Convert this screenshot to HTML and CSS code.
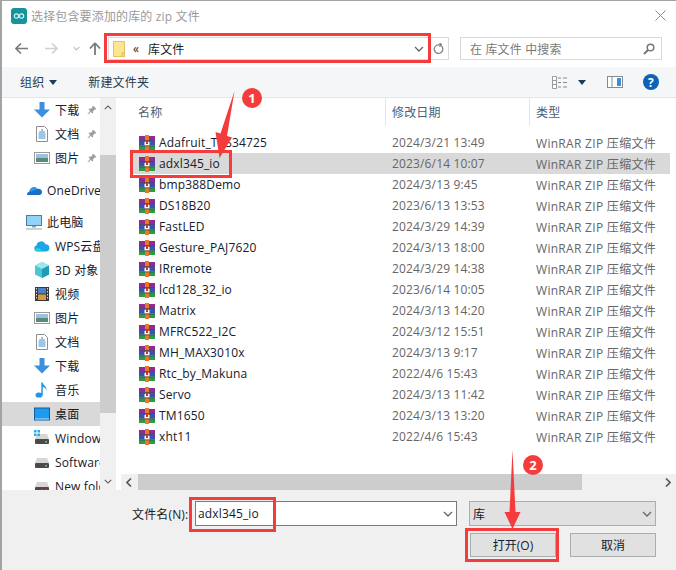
FILE: index.html
```html
<!DOCTYPE html>
<html lang="zh-CN">

<head>
  <meta charset="UTF-8">
  <title>选择包含要添加的库的 zip 文件</title>
  <link rel="stylesheet" href="styles.css">
</head>

<body>
  <!-- Shared icons -->
  <svg class="sprites" aria-hidden="true">
    <symbol id="i-rar" viewBox="0 0 16 16">
      <rect x="0" y="1" width="16" height="4.500" fill="#8e2c91"/>
      <rect x="0" y="5.500" width="16" height="5" fill="#3d4fb0"/>
      <rect x="0" y="10.500" width="16" height="4.500" fill="#2f9a46"/>
      <rect x="6" y="0" width="4" height="16" fill="#e8792b"/>
      <rect x="5.500" y="7" width="5" height="3.500" fill="#fff"/>
      <rect x="7" y="6" width="2" height="3" fill="#c9352a"/>
      <rect x="0" y="5" width="16" height="1" fill="#2a2a55" opacity=".6"/>
      <rect x="0" y="10.400" width="16" height="1" fill="#1f2f3f" opacity=".6"/>
    </symbol>
    <symbol id="i-down" viewBox="0 0 16 16">
      <path d="M5.500 0h5v7.500H16L8 15.500 0 7.500h5.500z" fill="#3d8edb"/>
    </symbol>
    <symbol id="i-doc" viewBox="0 0 16 16">
      <path d="M2.500.5h8l3 3v12h-11z" fill="#fff" stroke="#8f8f8f"/>
      <path d="M7 4h2M5 6h6M4.500 8h7M4.500 10h7M4.500 12h7" stroke="#3a8fd0"/>
    </symbol>
    <symbol id="i-pic" viewBox="0 0 16 16">
      <rect x=".5" y="2.500" width="15" height="11" fill="#fff" stroke="#9a9a9a"/>
      <rect x="2" y="4" width="12" height="4" fill="#9cc0de"/>
      <rect x="2" y="8" width="12" height="4" fill="#5b8a78"/>
    </symbol>
    <symbol id="i-pin" viewBox="0 0 10 10">
      <path d="M6 .5l3.500 3.500-1 .6-.7-.2-1.800 1.800.2 1.500-.8.8-1.600-1.600L1 9.500l-.5-.5 2.600-3-1.600-1.600.8-.8 1.500.2L5.600 2l-.2-.7z" fill="#9aa0a6"/>
    </symbol>
    <symbol id="i-disk" viewBox="0 0 16 16">
      <path d="M3 4h10l2 5H1z" fill="#d6d6d6"/>
      <rect x="1" y="9" width="14" height="5" rx="1" fill="#4a4a4a"/>
      <rect x="11" y="11" width="2" height="1.500" fill="#4fd35a"/>
    </symbol>
    <symbol id="i-chev" viewBox="0 0 10 6">
      <path d="M1 1l4 4 4-4" fill="none" stroke="currentColor" stroke-width="1.300"/>
    </symbol>
    <symbol id="i-caret" viewBox="0 0 8 5">
      <path d="M0 0h8L4 5z" fill="#1f3a5f"/>
    </symbol>
  </svg>

  <div class="dialog">

    <div class="titlebar">
      <svg class="app-icon" width="16" height="16" viewBox="0 0 16 16">
        <rect width="16" height="16" rx="3" fill="#17939b"/>
        <circle cx="5.500" cy="8" r="2.200" fill="none" stroke="#d7f0ee" stroke-width="1.200"/>
        <circle cx="10.500" cy="8" r="2.200" fill="none" stroke="#d7f0ee" stroke-width="1.200"/>
      </svg>
      <span class="title">选择包含要添加的库的 zip 文件</span>
      <svg class="close" width="11" height="11" viewBox="0 0 11 11">
        <path d="M.5.500l10 10M10.500.500l-10 10" stroke="#8a8a8a"/>
      </svg>
    </div>

    <div class="navbar">
      <svg class="nav-back" width="13" height="11" viewBox="0 0 13 11">
        <path d="M6 .5L1 5.500l5 5M1 5.500h12" fill="none" stroke="#7a7a7a" stroke-width="1.600"/>
      </svg>
      <svg class="nav-forward" width="13" height="11" viewBox="0 0 13 11">
        <path d="M7 .5l5 5-5 5M12 5.500H0" fill="none" stroke="#d0d0d0" stroke-width="1.600"/>
      </svg>
      <svg class="nav-history" width="7" height="5"><use href="#i-chev"/></svg>
      <svg class="nav-up" width="12" height="13" viewBox="0 0 12 13">
        <path d="M6 1L1 6.500M6 1l5 5.500M6 1v12" fill="none" stroke="#7a7a7a" stroke-width="1.800"/>
      </svg>
      <div class="address">
        <svg width="12" height="16" viewBox="0 0 12 16">
          <path d="M.5.500h11v15H.5z" fill="#fde58f" stroke="#e3c363"/>
          <path d="M9 11.500h2.500v4H9z" fill="#f4d572" stroke="#e3c363"/>
        </svg>
        <span class="crumb-more">«</span>
        <span class="crumb">库文件</span>
        <svg class="address-chev" width="10" height="6"><use href="#i-chev"/></svg>
      </div>
      <div class="refresh">
        <svg width="11" height="12" viewBox="0 0 11 12">
          <path d="M8.500 3a4.300 4.300 0 1 1-3-1.200H8M6.500 0l2 1.800-2 1.800" fill="none" stroke="#7d7d7d" stroke-width="1.200"/>
        </svg>
      </div>
      <div class="search">
        <span>在 库文件 中搜索</span>
        <svg width="12" height="12" viewBox="0 0 12 12">
          <circle cx="7.500" cy="4.500" r="3.300" fill="none" stroke="#777" stroke-width="1.500"/>
          <path d="M5 7L1 11" stroke="#777" stroke-width="2"/>
        </svg>
      </div>
    </div>

    <div class="toolbar">
      <span class="tool">组织</span>
      <svg class="tool-caret" width="8" height="5"><use href="#i-caret"/></svg>
      <span class="tool new-folder">新建文件夹</span>
      <svg class="view-icon" width="16" height="13" viewBox="0 0 16 13">
        <path d="M.5.500h4v12h-4zM.5 4.500h4M.5 8.500h4" fill="#fff" stroke="#9a9a9a"/>
        <path d="M6 2h3M11 2h4M6 6.500h3M11 6.500h4M6 11h3M11 11h4" stroke="#8a8a8a"/>
      </svg>
      <svg class="view-caret" width="8" height="5"><use href="#i-caret"/></svg>
      <svg class="pane-icon" width="16" height="12" viewBox="0 0 16 12">
        <rect x=".5" y=".5" width="15" height="11" fill="#fff" stroke="#8a8a8a"/>
        <rect x="10" y="2" width="4" height="8" fill="#3d8edb"/>
        <path d="M5 1v10" stroke="#8a8a8a"/>
      </svg>
      <span class="help">?</span>
    </div>

    <div class="main">
      <div class="sidebar">
        <ul class="tree">
          <li class="tree-item"><svg width="16" height="16"><use href="#i-down"/></svg><span>下载</span><svg class="pin" width="10" height="10"><use href="#i-pin"/></svg></li>
          <li class="tree-item"><svg width="16" height="16"><use href="#i-doc"/></svg><span>文档</span><svg class="pin" width="10" height="10"><use href="#i-pin"/></svg></li>
          <li class="tree-item"><svg width="16" height="16"><use href="#i-pic"/></svg><span>图片</span><svg class="pin" width="10" height="10"><use href="#i-pin"/></svg></li>
          <li class="tree-item root spaced">
            <svg width="16" height="16" viewBox="0 0 16 16">
              <path d="M1 13a3 3 0 0 1 0-.5 3 3 0 0 1 2.500-3A4.500 4.500 0 0 1 11.500 7 3.300 3.300 0 0 1 16 10a3 3 0 0 1-2 3z" fill="#1a6fc4"/>
              <path d="M3.500 9.500a4.500 4.500 0 0 1 1.500-3A4 4 0 0 1 11.500 7L5 9.500z" fill="#2f9be8"/>
            </svg>
            <span>OneDrive</span>
          </li>
          <li class="tree-item root spaced">
            <svg width="16" height="16" viewBox="0 0 16 16">
              <rect x=".5" y="1.500" width="15" height="10" fill="#8fd3f7" stroke="#4f7f9f"/>
              <path d="M6 12h4v1.500H6z" fill="#8aa0ae"/>
              <path d="M0 15h16" stroke="#a8b4bc" stroke-width="1.200"/>
            </svg>
            <span>此电脑</span>
          </li>
          <li class="tree-item">
            <svg width="16" height="16" viewBox="0 0 16 16">
              <path d="M3 13.500a3 3 0 0 1-.5-5.900 4.700 4.700 0 0 1 9-1.400 3.700 3.700 0 0 1 1 7.300z" fill="#1ba6e8"/>
              <path d="M1 11.500a3 3 0 0 0 2 2h5a4 4 0 0 0-7-2z" fill="#2ad0d0"/>
            </svg>
            <span>WPS云盘</span>
          </li>
          <li class="tree-item">
            <svg width="16" height="16" viewBox="0 0 16 16">
              <path d="M8 0l7 3.500v9L8 16l-7-3.500v-9z" fill="#4cc4d4"/>
              <path d="M8 0l7 3.500L8 7 1 3.500z" fill="#9be6ee"/>
              <path d="M8 7l7-3.500v9L8 16z" fill="#1f9cb4"/>
            </svg>
            <span>3D 对象</span>
          </li>
          <li class="tree-item">
            <svg width="16" height="16" viewBox="0 0 16 16">
              <rect x="1" y="1" width="14" height="14" fill="#3a3a3a"/>
              <rect x="4" y="2" width="8" height="5.500" fill="#4f7fc8"/>
              <rect x="4" y="8.500" width="8" height="5.500" fill="#d89a3a"/>
              <path d="M2.500 2v12M13.500 2v12" stroke="#ddd" stroke-dasharray="1.500 1.500"/>
            </svg>
            <span>视频</span>
          </li>
          <li class="tree-item"><svg width="16" height="16"><use href="#i-pic"/></svg><span>图片</span></li>
          <li class="tree-item"><svg width="16" height="16"><use href="#i-doc"/></svg><span>文档</span></li>
          <li class="tree-item"><svg width="16" height="16"><use href="#i-down"/></svg><span>下载</span></li>
          <li class="tree-item">
            <svg width="16" height="16" viewBox="0 0 16 16">
              <ellipse cx="5" cy="13" rx="3.500" ry="2.600" fill="#1e96e8"/>
              <path d="M7.300 13V.5h1.500c.3 3 4.200 3.700 3.700 8-.6-2.500-2.300-3.300-3.700-3.500V13z" fill="#1e96e8"/>
            </svg>
            <span>音乐</span>
          </li>
          <li class="tree-item selected">
            <svg width="16" height="16" viewBox="0 0 16 16">
              <rect x=".5" y="2" width="15" height="12" fill="#1e9bf0" stroke="#0f5f9f"/>
              <path d="M1 13h14" stroke="#fff" stroke-opacity=".7"/>
            </svg>
            <span>桌面</span>
          </li>
          <li class="tree-item">
            <svg width="16" height="16" viewBox="0 0 16 16">
              <use href="#i-disk"/>
              <path d="M0 0h2.500v2.500H0zM3.500 0H6v2.500H3.500zM0 3.500h2.500V6H0zM3.500 3.500H6V6H3.500z" fill="#19b2ee"/>
            </svg>
            <span>Windows (C:)</span>
          </li>
          <li class="tree-item"><svg width="16" height="16"><use href="#i-disk"/></svg><span>Software (D:)</span></li>
          <li class="tree-item">
            <svg width="16" height="16" viewBox="0 0 16 16">
              <use href="#i-disk"/>
              <path d="M7 11l6 4M13 11l-6 4" stroke="#d4232b" stroke-width="2"/>
            </svg>
            <span>New folder</span>
          </li>
        </ul>
        <div class="side-scroll">
          <svg class="scroll-up" width="8" height="5"><use href="#i-chev"/></svg>
          <div class="side-thumb"></div>
          <svg class="scroll-down" width="8" height="5"><use href="#i-chev"/></svg>
        </div>
      </div>

      <div class="files">
        <div class="file-head">
          <span class="col-name">名称</span>
          <span class="col-date">修改日期</span>
          <span class="col-type">类型</span>
        </div>
        <ul class="file-list">
          <li class="file"><svg width="16" height="16"><use href="#i-rar"/></svg><span class="col-name">Adafruit_TCS34725</span><span class="col-date">2024/3/21 13:49</span><span class="col-type">WinRAR ZIP 压缩文件</span></li>
          <li class="file active"><svg width="16" height="16"><use href="#i-rar"/></svg><span class="col-name">adxl345_io</span><span class="col-date">2023/6/14 10:07</span><span class="col-type">WinRAR ZIP 压缩文件</span></li>
          <li class="file"><svg width="16" height="16"><use href="#i-rar"/></svg><span class="col-name">bmp388Demo</span><span class="col-date">2024/3/13 9:45</span><span class="col-type">WinRAR ZIP 压缩文件</span></li>
          <li class="file"><svg width="16" height="16"><use href="#i-rar"/></svg><span class="col-name">DS18B20</span><span class="col-date">2023/6/13 13:53</span><span class="col-type">WinRAR ZIP 压缩文件</span></li>
          <li class="file"><svg width="16" height="16"><use href="#i-rar"/></svg><span class="col-name">FastLED</span><span class="col-date">2024/3/29 14:39</span><span class="col-type">WinRAR ZIP 压缩文件</span></li>
          <li class="file"><svg width="16" height="16"><use href="#i-rar"/></svg><span class="col-name">Gesture_PAJ7620</span><span class="col-date">2024/3/13 18:00</span><span class="col-type">WinRAR ZIP 压缩文件</span></li>
          <li class="file"><svg width="16" height="16"><use href="#i-rar"/></svg><span class="col-name">IRremote</span><span class="col-date">2024/3/29 14:38</span><span class="col-type">WinRAR ZIP 压缩文件</span></li>
          <li class="file"><svg width="16" height="16"><use href="#i-rar"/></svg><span class="col-name">lcd128_32_io</span><span class="col-date">2023/6/14 10:05</span><span class="col-type">WinRAR ZIP 压缩文件</span></li>
          <li class="file"><svg width="16" height="16"><use href="#i-rar"/></svg><span class="col-name">Matrix</span><span class="col-date">2024/3/13 14:20</span><span class="col-type">WinRAR ZIP 压缩文件</span></li>
          <li class="file"><svg width="16" height="16"><use href="#i-rar"/></svg><span class="col-name">MFRC522_I2C</span><span class="col-date">2024/3/12 15:51</span><span class="col-type">WinRAR ZIP 压缩文件</span></li>
          <li class="file"><svg width="16" height="16"><use href="#i-rar"/></svg><span class="col-name">MH_MAX3010x</span><span class="col-date">2024/3/13 9:17</span><span class="col-type">WinRAR ZIP 压缩文件</span></li>
          <li class="file"><svg width="16" height="16"><use href="#i-rar"/></svg><span class="col-name">Rtc_by_Makuna</span><span class="col-date">2022/4/6 15:43</span><span class="col-type">WinRAR ZIP 压缩文件</span></li>
          <li class="file"><svg width="16" height="16"><use href="#i-rar"/></svg><span class="col-name">Servo</span><span class="col-date">2024/3/13 11:42</span><span class="col-type">WinRAR ZIP 压缩文件</span></li>
          <li class="file"><svg width="16" height="16"><use href="#i-rar"/></svg><span class="col-name">TM1650</span><span class="col-date">2024/3/13 13:20</span><span class="col-type">WinRAR ZIP 压缩文件</span></li>
          <li class="file"><svg width="16" height="16"><use href="#i-rar"/></svg><span class="col-name">xht11</span><span class="col-date">2022/4/6 15:43</span><span class="col-type">WinRAR ZIP 压缩文件</span></li>
        </ul>
        <div class="h-scroll">
          <svg class="h-arrow" width="6" height="9" viewBox="0 0 6 9"><path d="M5 .5l-4 4 4 4" fill="none" stroke="#555" stroke-width="1.600"/></svg>
          <div class="h-thumb"></div>
          <svg class="h-arrow" width="6" height="9" viewBox="0 0 6 9"><path d="M1 .5l4 4-4 4" fill="none" stroke="#555" stroke-width="1.600"/></svg>
        </div>
      </div>
    </div>

    <div class="footer">
      <div class="footer-row">
        <label class="name-label">文件名(N):</label>
        <div class="name-input">
          <span>adxl345_io</span>
          <svg width="10" height="6"><use href="#i-chev"/></svg>
        </div>
        <div class="filter">
          <span>库</span>
          <svg width="10" height="6"><use href="#i-chev"/></svg>
        </div>
      </div>
      <div class="footer-row buttons">
        <button class="btn">打开(O)</button>
        <button class="btn">取消</button>
      </div>
    </div>

    <!-- Red annotations drawn over the dialog -->
    <div class="mark mark-address"></div>
    <div class="mark mark-row"></div>
    <div class="mark mark-input"></div>
    <div class="mark mark-open"></div>
    <svg class="arrows" width="676" height="570" viewBox="0 0 676 570">
      <path d="M234.500 91L227 136l5 1.500L219.500 158 215.500 132l5 1.500z" fill="#f43c3c"/>
      <path d="M512.500 450l3 62h5l-8 17-8-17h5z" fill="#f43c3c"/>
      <circle cx="252" cy="98" r="10" fill="#f43c3c"/>
      <text x="252" y="103" class="badge">1</text>
      <circle cx="533" cy="465" r="10" fill="#f43c3c"/>
      <text x="533" y="470" class="badge">2</text>
    </svg>
  </div>
</body>

</html>
```

FILE: styles.css
```css
* {
  box-sizing: border-box;
}

body {
  margin: 0;
  background-color: #ffffff;
  font-family: "Open Sans", "Noto Sans CJK SC", sans-serif;
  font-size: 12px;
  letter-spacing: .15px;
  color: #1a1a1a;
}

ul {
  list-style: none;
  margin: 0;
  padding: 0;
}

svg {
  display: block;
  flex: none;
}

.sprites {
  display: none;
}

.dialog {
  position: relative;
  width: 676px;
  height: 570px;
  overflow: hidden;
  background-color: #ffffff;
  border-top: 1px solid #a3a3a3;
  border-left: 2px solid #a3a3a3;
}

/* Title bar */
.titlebar {
  display: flex;
  align-items: center;
  height: 29px;
  padding-left: 9px;
}

.app-icon {
  margin-right: 4px;
}

.title {
  color: #9a9a9a;
}

.close {
  margin-left: auto;
  margin-right: 10px;
}

/* Navigation bar */
.navbar {
  display: flex;
  align-items: center;
  height: 37px;
  color: #8a8a8a;
}

.nav-back {
  margin-left: 13px;
}

.nav-forward {
  margin-left: 17px;
}

.nav-history {
  margin-left: 15px;
}

.nav-up {
  margin-left: 9px;
}

.address {
  display: flex;
  align-items: center;
  width: 321px;
  height: 23px;
  margin-left: 7px;
  padding-left: 4px;
  border: 1px solid #d9d9d9;
  color: #1a1a1a;
}

.crumb-more {
  width: 15px;
  margin-left: 8px;
  line-height: 1;
}

.crumb {
  color: #1a1a1a;
}

.address-chev {
  margin-left: auto;
  margin-right: 4px;
  color: #666;
}

.refresh {
  display: flex;
  align-items: center;
  justify-content: center;
  width: 20px;
  height: 23px;
  border: 1px solid #d9d9d9;
  border-left: 0;
}

.search {
  display: flex;
  align-items: center;
  justify-content: space-between;
  width: 202px;
  height: 23px;
  margin-left: 11px;
  padding: 0 6px 0 9px;
  border: 1px solid #d9d9d9;
  color: #7a7a7a;
}

/* Toolbar */
.toolbar {
  display: flex;
  align-items: center;
  height: 31px;
  background-color: #f5f6f7;
  border-bottom: 1px solid #e5e5e5;
}

.tool {
  color: #2b3a4a;
}

.tool:first-child {
  margin-left: 18px;
}

.tool-caret {
  margin-left: 5px;
}

.new-folder {
  margin-left: 31px;
}

.view-icon {
  margin-left: auto;
}

.view-caret {
  margin-left: 10px;
}

.pane-icon {
  margin-left: 21px;
}

.help {
  display: flex;
  align-items: center;
  justify-content: center;
  width: 16px;
  height: 16px;
  margin-left: 20px;
  margin-right: 17px;
  border-radius: 50%;
  background-color: #0f63b5;
  color: #ffffff;
  font-weight: 700;
  font-size: 12px;
}

/* Main area */
.main {
  display: flex;
  height: 392px;
}

.sidebar {
  display: flex;
  width: 114px;
  flex: none;
}

.tree {
  width: 99px;
  overflow: hidden;
  height: 392px;
}

.tree-item {
  display: flex;
  align-items: center;
  gap: 5px;
  height: 24px;
  padding-left: 32px;
  white-space: nowrap;
}

.tree-item span {
  color: #14202c;
}

.tree-item.root {
  padding-left: 24px;
}

.tree-item.spaced {
  margin-top: 8px;
}

.tree-item.selected {
  background-color: #d9d9d9;
}

.pin {
  margin-left: 3px;
}

.side-scroll {
  display: flex;
  flex-direction: column;
  align-items: center;
  width: 16px;
  height: 392px;
  background-color: #f0f0f0;
  color: #555;
}

.scroll-up {
  margin-top: 7px;
  transform: scaleY(-1);
}

.side-thumb {
  width: 16px;
  height: 258px;
  margin-top: 45px;
  background-color: #cdcdcd;
}

.scroll-down {
  margin-top: 66px;
}

.files {
  flex: 1;
  min-width: 0;
  margin-left: 5px;
}

.file-head {
  display: flex;
  align-items: flex-start;
  height: 30px;
  color: #4c607a;
}

.file-head span {
  height: 28px;
  line-height: 29px;
}

.file-head .col-name {
  width: 265px;
  padding-left: 17px;
  border-right: 1px solid #e5e5e5;
}

.file-head .col-date {
  width: 144px;
  padding-left: 6px;
  border-right: 1px solid #e5e5e5;
}

.file-head .col-type {
  padding-left: 6px;
}

.file-list {
  height: 346px;
  padding-top: 4px;
}

.file {
  display: flex;
  align-items: center;
  height: 21px;
  margin: 0 6px 0 12px;
  padding-left: 6px;
  color: #333;
}

.file.active {
  background-color: #d9d9d9;
}

.file .col-name {
  width: 233px;
  margin-left: 4px;
  color: #14202c;
}

.file .col-date {
  width: 144px;
  color: #666;
}

.file .col-type {
  color: #666;
  letter-spacing: .3px;
  white-space: nowrap;
}

.h-scroll {
  display: flex;
  align-items: center;
  height: 16px;
  background-color: #f0f0f0;
}

.h-arrow {
  margin-left: 5px;
  margin-right: 5px;
}

.h-thumb {
  width: 444px;
  height: 16px;
  margin-right: auto;
  margin-left: 1px;
  background-color: #cdcdcd;
}

/* Footer */
.footer {
  height: 80px;
  background-color: #f0f0f0;
  padding-top: 11px;
}

.footer-row {
  display: flex;
  align-items: center;
  height: 25px;
}

.name-label {
  width: 193px;
  padding-left: 130px;
  white-space: nowrap;
}

.name-input {
  display: flex;
  align-items: center;
  justify-content: space-between;
  width: 262px;
  height: 25px;
  padding: 0 3px 0 2px;
  background-color: #ffffff;
  border: 1px solid #7a7a7a;
  color: #666;
}

.name-input span {
  color: #14202c;
}

.filter {
  display: flex;
  align-items: center;
  justify-content: space-between;
  width: 187px;
  height: 25px;
  margin-left: 12px;
  padding: 0 3px;
  background-color: #e1e1e1;
  border: 1px solid #adadad;
  color: #666;
}

.filter span {
  color: #14202c;
}

.buttons {
  justify-content: flex-end;
  gap: 14px;
  height: 24px;
  margin-top: 7px;
  padding-right: 20px;
}

.btn {
  width: 86px;
  height: 24px;
  padding: 0;
  background-color: #e1e1e1;
  border: 1px solid #adadad;
  color: #14202c;
  font: inherit;
}

/* Annotations */
.mark {
  position: absolute;
  border: 3px solid #f43c3c;
}

.mark-address {
  left: 102px;
  top: 32px;
  width: 327px;
  height: 30px;
}

.mark-row {
  left: 128px;
  top: 149px;
  width: 102px;
  height: 28px;
}

.mark-input {
  left: 187px;
  top: 496px;
  width: 87px;
  height: 35px;
}

.mark-open {
  left: 463px;
  top: 527px;
  width: 94px;
  height: 34px;
}

.arrows {
  position: absolute;
  left: -2px;
  top: -1px;
}

.badge {
  fill: #ffffff;
  font-size: 13px;
  font-weight: 700;
  text-anchor: middle;
}
```
